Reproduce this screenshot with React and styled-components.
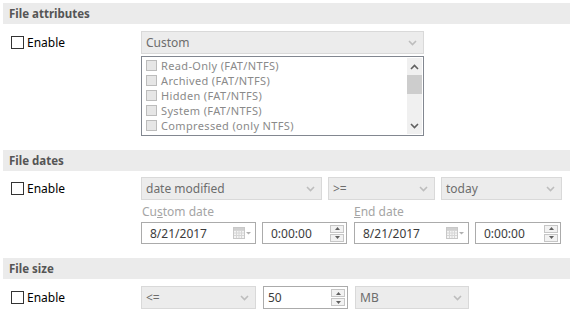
import styled, { createGlobalStyle } from "styled-components";

const GlobalStyle = createGlobalStyle`
  body {
    margin: 0;
    background: #fff;
    font-family: "Noto Sans", "Open Sans", sans-serif;
    font-size: 12px;
    line-height: 15px;
  }
`;

const Page = styled.div`
  width: 573px;
  height: 315px;
  box-sizing: border-box;
  padding: 3px 3px 0 3px;
  display: flex;
  flex-direction: column;
  overflow: hidden;
`;

const Section = styled.section`
  margin-bottom: ${(p) => p.$gap || 0}px;
`;

const Header = styled.div`
  height: 21px;
  background: #ebebeb;
  padding-left: 6px;
  display: flex;
  align-items: center;
  font-weight: bold;
  font-size: 11.5px;
  color: #555;
`;

const Body = styled.div`
  display: grid;
  grid-template-columns: 138px 1fr;
  padding-top: ${(p) => p.$top || 6}px;
`;

const EnableLabel = styled.label`
  display: flex;
  align-items: center;
  gap: 3px;
  padding-left: 8px;
  height: 23px;
  color: #000;
  font-size: 12px;
`;

const CheckBox = styled.span`
  width: 11px;
  height: 11px;
  border: 1px solid #333;
  background: #fff;
  display: inline-block;
`;

const Controls = styled.div`
  display: flex;
  flex-direction: column;
`;

const Row = styled.div`
  display: flex;
  gap: ${(p) => p.$gap || 6}px;
`;

const Combo = styled.div`
  width: ${(p) => p.$w}px;
  height: 23px;
  box-sizing: border-box;
  border: 1px solid #d9d9d9;
  background: #ececec;
  color: #6d6d6d;
  padding: 0 6px 0 4px;
  display: flex;
  align-items: center;
  justify-content: space-between;
  font-size: 12px;
`;

const ListBox = styled.div`
  margin-top: 2px;
  width: 283px;
  height: 80px;
  box-sizing: border-box;
  border: 1px solid #828790;
  display: flex;
  background: #fff;
`;

const Items = styled.div`
  flex: 1;
  padding: 1px 0 0 4px;
  overflow: hidden;
`;

const Item = styled.div`
  height: 15px;
  line-height: 15px;
  display: flex;
  align-items: center;
  gap: 4px;
  color: #8a8a8a;
  white-space: nowrap;
  font-size: 11px;
  letter-spacing: 0.35px;
`;

const SmallBox = styled.span`
  width: 9px;
  height: 9px;
  border: 1px solid #bcbcbc;
  background: #e6e6e6;
  display: inline-block;
  flex: none;
`;

const ScrollBar = styled.div`
  width: 15px;
  margin: 1px 1px 1px 0;
  background: #f0f0f0;
  display: flex;
  flex-direction: column;
  align-items: center;
`;

const ScrollArrow = styled.div`
  height: 17px;
  width: 15px;
  display: flex;
  align-items: center;
  justify-content: center;
`;

const Thumb = styled.div`
  width: 15px;
  height: 19px;
  background: #cdcdcd;
`;

const Filler = styled.div`
  flex: 1;
`;

const LabelRow = styled.div`
  display: grid;
  grid-template-columns: 212px 120px;
  height: 22px;
  align-items: center;
`;

const FieldLabel = styled.div`
  padding-left: 1px;
  color: #a5a5a5;
  font-size: 12px;

  u {
    text-decoration-color: #a5a5a5;
  }
`;

const Field = styled.div`
  width: ${(p) => p.$w}px;
  height: ${(p) => p.$h || 22}px;
  box-sizing: border-box;
  border: 1px solid #ababab;
  background: #fff;
  color: #3c3c3c;
  padding: 0 2px 0 ${(p) => p.$pl || 8}px;
  margin-left: ${(p) => p.$ml || 0}px;
  display: flex;
  align-items: center;
  justify-content: space-between;
  font-size: 12px;
`;

const SpinBox = styled.div`
  display: flex;
  flex-direction: column;
  gap: 1px;
`;

const SpinButton = styled.div`
  width: 14px;
  height: 8px;
  box-sizing: border-box;
  border: 1px solid #c6c6c6;
  background: #f2f2f2;
  display: flex;
  align-items: center;
  justify-content: center;
`;

const Chevron = ({ up, color = "#bdbdbd" }) => (
  <svg width="9" height="6" viewBox="0 0 9 6">
    <path
      d={up ? "M1 5 L4.5 1.5 L8 5" : "M1 1 L4.5 4.5 L8 1"}
      fill="none"
      stroke={color}
      strokeWidth="1.6"
    />
  </svg>
);

const Tri = ({ up }) => (
  <svg width="5" height="3" viewBox="0 0 5 3">
    <path d={up ? "M0 3 L2.5 0 L5 3 Z" : "M0 0 L2.5 3 L5 0 Z"} fill="#606060" />
  </svg>
);

const CalendarIcon = () => (
  <svg width="20" height="12" viewBox="0 0 20 12">
    <rect x="0.5" y="0.5" width="11" height="11" fill="#f4f4f4" stroke="#c8c8c8" />
    <path
      d="M1 3.5 H11 M1 6 H11 M1 8.5 H11 M3.5 3 V11 M6 3 V11 M8.5 3 V11"
      stroke="#d6d6d6"
      strokeWidth="1"
    />
    <rect x="1" y="1" width="10" height="2" fill="#d0d0d0" />
    <path d="M13 5 L15.5 7.5 L18 5 Z" fill="#b0b0b0" />
  </svg>
);

const Spinner = () => (
  <SpinBox>
    <SpinButton>
      <Tri up />
    </SpinButton>
    <SpinButton>
      <Tri />
    </SpinButton>
  </SpinBox>
);

const Enable = () => (
  <EnableLabel>
    <CheckBox />
    Enable
  </EnableLabel>
);

const attributes = [
  "Read-Only (FAT/NTFS)",
  "Archived (FAT/NTFS)",
  "Hidden (FAT/NTFS)",
  "System (FAT/NTFS)",
  "Compressed (only NTFS)",
];

const App = () => {
  return (
    <Page>
      <GlobalStyle />

      <Section $gap={14}>
        <Header>File attributes</Header>
        <Body $top={7}>
          <Enable />
          <Controls>
            <Combo $w={283}>
              Custom
              <Chevron />
            </Combo>
            <ListBox>
              <Items>
                {attributes.map((a) => (
                  <Item key={a}>
                    <SmallBox />
                    {a}
                  </Item>
                ))}
              </Items>
              <ScrollBar>
                <ScrollArrow>
                  <Chevron up color="#606060" />
                </ScrollArrow>
                <Thumb />
                <Filler />
                <ScrollArrow>
                  <Chevron color="#606060" />
                </ScrollArrow>
              </ScrollBar>
            </ListBox>
          </Controls>
        </Body>
      </Section>

      <Section $gap={14}>
        <Header>File dates</Header>
        <Body $top={6}>
          <Enable />
          <Controls>
            <Row $gap={6}>
              <Combo $w={181}>
                date modified
                <Chevron />
              </Combo>
              <Combo $w={107}>
                &gt;=
                <Chevron />
              </Combo>
              <Combo $w={121}>
                today
                <Chevron />
              </Combo>
            </Row>
            <LabelRow>
              <FieldLabel>
                Cu<u>s</u>tom date
              </FieldLabel>
              <FieldLabel>
                <u>E</u>nd date
              </FieldLabel>
            </LabelRow>
            <Row $gap={6}>
              <Field $w={115}>
                8/21/2017
                <CalendarIcon />
              </Field>
              <Field $w={85}>
                0:00:00
                <Spinner />
              </Field>
              <Field $w={115} $ml={1}>
                8/21/2017
                <CalendarIcon />
              </Field>
              <Field $w={86}>
                0:00:00
                <Spinner />
              </Field>
            </Row>
          </Controls>
        </Body>
      </Section>

      <Section>
        <Header>File size</Header>
        <Body $top={7}>
          <Enable />
          <Row $gap={7}>
            <Combo $w={115}>
              &lt;=
              <Chevron />
            </Combo>
            <Field $w={85} $h={23} $pl={4}>
              50
              <Spinner />
            </Field>
            <Combo $w={114}>
              MB
              <Chevron />
            </Combo>
          </Row>
        </Body>
      </Section>
    </Page>
  );
};

export default App;
